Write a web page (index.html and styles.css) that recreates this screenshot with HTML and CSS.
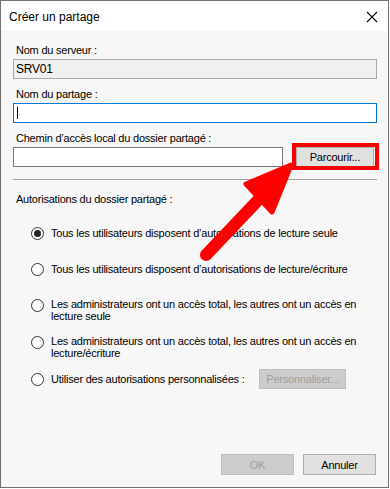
FILE: index.html
```html
<!DOCTYPE html>
<html>
<head>
  <meta charset="utf-8">
  <title>Créer un partage</title>
  <link rel="stylesheet" href="styles.css">
</head>
<body>
  <div class="dialog">
    <div class="titlebar">
      <span class="title">Créer un partage</span>
      <svg class="close" width="12" height="12" viewBox="0 0 12 12">
        <path d="M1 1 L11 11 M11 1 L1 11" stroke="#000" stroke-width="1.1" fill="none"/>
      </svg>
    </div>

    <div class="content">
      <div class="field-label">Nom du serveur :</div>
      <div class="textbox readonly">SRV01</div>

      <div class="field-label">Nom du partage :</div>
      <div class="textbox focused"><span class="caret"></span></div>

      <div class="field-label">Chemin d’accès local du dossier partagé :</div>
      <div class="path-row">
        <div class="textbox path"></div>
        <button class="btn browse">Parcourir...</button>
      </div>

      <div class="separator"></div>

      <div class="group-label">Autorisations du dossier partagé :</div>
      <ul class="options">
        <li class="option">
          <span class="radio checked"></span>
          <span class="option-text">Tous les utilisateurs disposent d’autorisations de lecture seule</span>
        </li>
        <li class="option">
          <span class="radio"></span>
          <span class="option-text">Tous les utilisateurs disposent d’autorisations de lecture/écriture</span>
        </li>
        <li class="option tall">
          <span class="radio"></span>
          <span class="option-text two-line">Les administrateurs ont un accès total, les autres ont un accès en lecture seule</span>
        </li>
        <li class="option tall">
          <span class="radio"></span>
          <span class="option-text two-line">Les administrateurs ont un accès total, les autres ont un accès en lecture/écriture</span>
        </li>
        <li class="option">
          <span class="radio"></span>
          <span class="option-text custom">Utiliser des autorisations personnalisées :</span>
          <button class="btn disabled customize" disabled>Personnaliser...</button>
        </li>
      </ul>

      <div class="footer">
        <button class="btn disabled footer-btn" disabled>OK</button>
        <button class="btn footer-btn">Annuler</button>
      </div>
    </div>
  </div>

  <!-- annotation overlay -->
  <div class="highlight"></div>
  <svg class="arrow" width="390" height="489" viewBox="0 0 390 489">
    <line x1="262" y1="196" x2="206" y2="255" stroke="#f00" stroke-width="12" stroke-linecap="round"/>
    <polygon points="291,165 246,184 272,212" fill="#f00" stroke="#f00" stroke-width="5" stroke-linejoin="round"/>
  </svg>
</body>
</html>
```

FILE: styles.css
```css
/* Reset */
*,
*::before,
*::after {
  box-sizing: border-box;
}

body {
  margin: 0;
  position: relative;
  width: 390px;
  height: 489px;
  background-color: #fff;
  font-family: "Liberation Sans", Arial, sans-serif;
  font-size: 11px;
  letter-spacing: -0.22px;
  color: #000;
  overflow: hidden;
}

/* Window */
.dialog {
  width: 389px;
  height: 488px;
  border: 1px solid #707070;
  display: flex;
  flex-direction: column;
  background-color: #f7f7f7;
}

.titlebar {
  height: 30px;
  background-color: #fff;
  display: flex;
  align-items: center;
  justify-content: space-between;
  padding: 0 8px 0 8px;
}

.title {
  font-size: 12px;
  letter-spacing: 0;
  padding-top: 1px;
}

.close {
  margin-right: 2px;
  margin-top: 1px;
}

/* Content */
.content {
  flex: 1;
  display: flex;
  flex-direction: column;
  padding: 12px 11px 12px 12px;
}

.field-label,
.group-label {
  line-height: 14px;
  height: 14px;
  padding-left: 3px;
  margin-bottom: 2px;
}

.textbox {
  height: 20px;
  border: 1px solid #7a7a7a;
  background-color: #fff;
  line-height: 18px;
  padding-left: 2px;
  margin-bottom: 8px;
  font-size: 12px;
}

.textbox.readonly {
  background-color: #f0f0f0;
  border-color: #a8a8a8;
}

.textbox.focused {
  border-color: #0078d7;
  display: flex;
  align-items: center;
}

.caret {
  width: 1px;
  height: 12px;
  background-color: #000;
  margin-left: 1px;
}

.path-row {
  display: flex;
  gap: 13px;
}

.textbox.path {
  width: 270px;
  margin-bottom: 0;
}

/* Buttons */
.btn {
  font-family: inherit;
  font-size: 11px;
  letter-spacing: -0.22px;
  color: #000;
  background-color: #e1e1e1;
  border: 1px solid #adadad;
  padding: 0;
  margin: 0;
}

.btn.browse {
  width: 78px;
  height: 20px;
}

.btn.disabled {
  background-color: #cccccc;
  border-color: #bfbfbf;
  color: #9e9e9e;
}

.separator {
  height: 1px;
  background-color: #a0a0a0;
  margin: 12px 0 12px 0;
}

/* Permission options */
.group-label {
  margin-bottom: 0;
}

.options {
  list-style: none;
  margin: 9px 0 0 0;
  padding: 0 0 0 18px;
}

.option {
  height: 36px;
  display: flex;
  align-items: center;
}

.option.tall {
  height: 37px;
}

.radio {
  flex: none;
  width: 13px;
  height: 13px;
  border: 1px solid #333;
  border-radius: 50%;
  background-color: #fff;
  margin-right: 7px;
  display: flex;
  align-items: center;
  justify-content: center;
}

.radio.checked::after {
  content: "";
  width: 7px;
  height: 7px;
  border-radius: 50%;
  background-color: #222;
}

.option-text {
  line-height: 12px;
  width: 318px;
}

.option-text.two-line {
  margin-top: 8px;
}

.option-text.custom {
  width: 208px;
}

.btn.customize {
  width: 87px;
  height: 20px;
}

/* Footer */
.footer {
  margin-top: auto;
  display: flex;
  justify-content: flex-end;
  gap: 9px;
  padding-right: 1px;
}

.footer-btn {
  width: 73px;
  height: 21px;
}

/* Annotation overlay */
.highlight {
  position: absolute;
  left: 292px;
  top: 143px;
  width: 87px;
  height: 27px;
  border: 4px solid #f00;
}

.arrow {
  position: absolute;
  left: 0;
  top: 0;
  pointer-events: none;
}
```
